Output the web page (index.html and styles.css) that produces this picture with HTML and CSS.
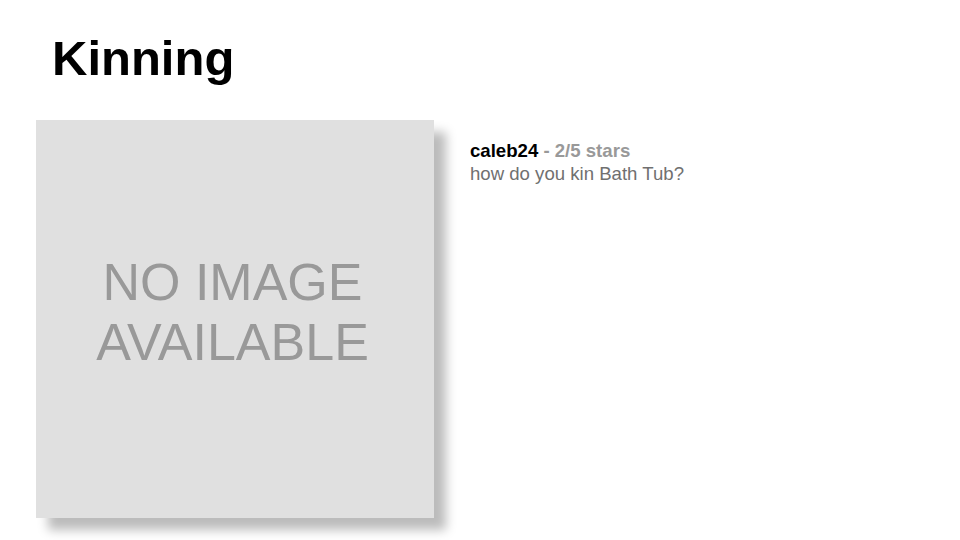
FILE: index.html
```html
<!DOCTYPE html>
<html>
<head>
<meta charset="utf-8">
<link rel="stylesheet" href="styles.css">
</head>
<body>
<div class="page">
  <h1 class="title">Kinning</h1>
  <div class="content">
    <div class="image">
      <div class="noimg">NO IMAGE<br>AVAILABLE</div>
    </div>
    <div class="review">
      <div class="head"><span class="user">caleb24</span><span class="rating"> - 2/5 stars</span></div>
      <div class="body">how do you kin Bath Tub?</div>
    </div>
  </div>
</div>
</body>
</html>
```
FILE: styles.css
```css
html, body {
  margin: 0;
  padding: 0;
  background: #ffffff;
  font-family: "Liberation Sans", Arial, sans-serif;
}
.page {
  width: 960px;
  height: 540px;
  overflow: hidden;
  padding: 0 0 0 36px;
  box-sizing: border-box;
}
.title {
  margin: 0;
  padding: 29px 0 0 16px;
  font-size: 49px;
  line-height: 58px;
  font-weight: bold;
  color: #000;
}
.content {
  display: flex;
  margin-top: 33px;
}
.image {
  width: 398px;
  height: 398px;
  background: #e0e0e0;
  box-shadow: 12px 12px 10px #bcbcbc;
  display: flex;
  align-items: center;
  justify-content: center;
  flex-shrink: 0;
}
.noimg {
  font-size: 52px;
  line-height: 60px;
  color: #999999;
  text-align: center;
  margin: -15px 5px 0 0;
}
.review {
  padding: 19px 0 0 36px;
  font-size: 18.6px;
  line-height: 23px;
}
.user {
  font-weight: bold;
  color: #000;
}
.rating {
  font-weight: bold;
  color: #999999;
}
.body {
  color: #707070;
}
```
